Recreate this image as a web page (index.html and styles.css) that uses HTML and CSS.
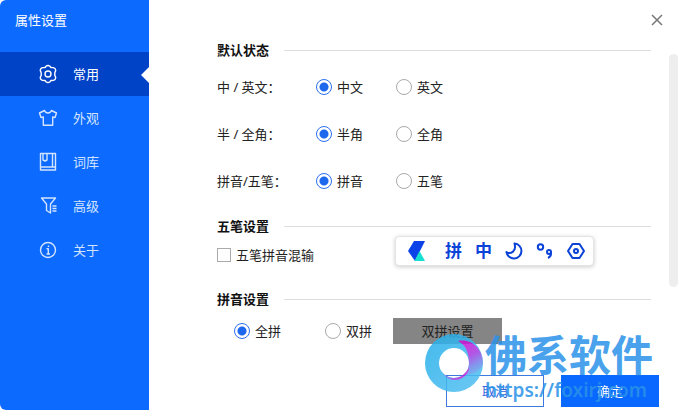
FILE: index.html
```html
<!DOCTYPE html>
<html lang="zh-CN">
<head>
  <meta charset="UTF-8">
  <meta name="viewport" content="width=device-width, initial-scale=1.0">
  <title>属性设置</title>
  <link rel="stylesheet" href="styles.css">
</head>
<body>
  <div class="window">
    <aside class="sidebar">
      <h1 class="title">属性设置</h1>
      <nav class="nav">
        <a class="nav-item active" href="#common">
          <svg class="icon" viewBox="0 0 20 20">
            <path d="M8 2.2Q10 .8 12 2.2L13 3.5L15.5 3.6Q17.8 4.2 17.7 6.6L16.8 8.7V11.3L17.7 13.4Q17.8 15.8 15.5 16.4L13 16.5L12 17.8Q10 19.2 8 17.8L7 16.5L4.5 16.4Q2.2 15.8 2.3 13.4L3.2 11.3V8.7L2.3 6.6Q2.2 4.2 4.5 3.6L7 3.5Z"/>
            <circle cx="10" cy="10" r="3"/>
          </svg>
          常用
        </a>
        <a class="nav-item" href="#skin">
          <svg class="icon" viewBox="0 0 20 20">
            <path d="M6.5 2.5L1.5 5L3 9.5L5.3 9V17.3H14.7V9L17 9.5L18.5 5L13.5 2.5Q12.5 5 10 5T6.5 2.5Z"/>
          </svg>
          外观
        </a>
        <a class="nav-item" href="#dict">
          <svg class="icon" viewBox="0 0 20 20">
            <path d="M2.5 1.5H17.5V18H2.5ZM2.5 15H17.5M14.5 1.5V15M5 1.5V8L7 9L9 8V1.5"/>
          </svg>
          词库
        </a>
        <a class="nav-item" href="#advanced">
          <svg class="icon" viewBox="0 0 20 20">
            <path d="M3.5 2H17.5L12.5 8V17L8.5 14.5V8ZM14.5 10H18.5M14.5 12.5H18.5M14.5 15H18.5"/>
          </svg>
          高级
        </a>
        <a class="nav-item" href="#about">
          <svg class="icon" viewBox="0 0 20 20">
            <circle cx="10" cy="10" r="7.5"/>
            <path d="M10.5 5.5V7M8.5 8.8H10.3V14M8.5 14H12"/>
          </svg>
          关于
        </a>
      </nav>
    </aside>

    <main class="content">
      <button class="close" type="button" aria-label="关闭">
        <svg viewBox="0 0 12 12"><path d="M1 1L11 11M11 1L1 11"/></svg>
      </button>

      <form class="settings" id="settings">
        <h2 class="heading">默认状态</h2>
        <div class="row">
          <span class="label">中 / 英文：</span>
          <label class="option"><input type="radio" name="lang" checked>中文</label>
          <label class="option"><input type="radio" name="lang">英文</label>
        </div>
        <div class="row">
          <span class="label">半 / 全角：</span>
          <label class="option"><input type="radio" name="width" checked>半角</label>
          <label class="option"><input type="radio" name="width">全角</label>
        </div>
        <div class="row">
          <span class="label">拼音/五笔：</span>
          <label class="option"><input type="radio" name="mode" checked>拼音</label>
          <label class="option"><input type="radio" name="mode">五笔</label>
        </div>

        <h2 class="heading">五笔设置</h2>
        <div class="row row-mix">
          <label class="option"><input type="checkbox">五笔拼音混输</label>
          <div class="ime-bar">
            <svg class="ime-logo" viewBox="0 0 18 20">
              <path fill="#0b43e8" d="M6 0H17L7 20L0 10Z"/>
              <path fill="#16e0cf" d="M11.5 10L17 20H6.5Z"/>
            </svg>
            <span>拼</span>
            <span>中</span>
            <svg class="ime-icon" viewBox="0 0 18 18">
              <path d="M9.5 1.5A7.5 7.5 0 1 1 1.5 10C5 12.5 12 10 9.5 1.5Z"/>
            </svg>
            <svg class="ime-icon" viewBox="0 0 18 18">
              <circle cx="4.5" cy="5" r="2.7"/>
              <circle cx="13" cy="10" r="2"/>
              <path d="M15 10Q15.5 14.5 12 16"/>
            </svg>
            <svg class="ime-icon" viewBox="0 0 18 18">
              <path d="M5.5 2H12.5L17 9L12.5 16H5.5L1 9Z"/>
              <circle cx="9" cy="9" r="2"/>
            </svg>
          </div>
        </div>

        <h2 class="heading">拼音设置</h2>
        <div class="row row-pinyin">
          <label class="option"><input type="radio" name="pinyin" checked>全拼</label>
          <label class="option"><input type="radio" name="pinyin">双拼</label>
          <button class="shuangpin" type="button">双拼设置</button>
        </div>
      </form>

      <footer class="footer">
        <button class="btn" type="button">取消</button>
        <button class="btn btn-primary" type="submit" form="settings">确定</button>
      </footer>

      <div class="scrollbar"></div>
    </main>

    <div class="watermark">
      <svg class="ring" viewBox="0 0 60 60">
        <defs>
          <linearGradient id="ring-blue" x1="0" y1="0" x2="1" y2="1">
            <stop offset="0" stop-color="#22aeea"/>
            <stop offset="1" stop-color="#55c0f2"/>
          </linearGradient>
          <linearGradient id="ring-pink" x1=".3" y1="0" x2=".7" y2="1">
            <stop offset="0" stop-color="#d010d8"/>
            <stop offset=".45" stop-color="#a23ce2"/>
            <stop offset=".75" stop-color="#6e86ea"/>
            <stop offset="1" stop-color="#55b0f0"/>
          </linearGradient>
          <linearGradient id="ring-edge" x1="0" y1="0" x2="1" y2="0">
            <stop offset="0" stop-color="#6a70e8"/>
            <stop offset="1" stop-color="#d010d8"/>
          </linearGradient>
        </defs>
        <path fill="url(#ring-blue)" fill-rule="evenodd" d="M30 1A29 29 0 1 1 30 59A29 29 0 1 1 30 1ZM30 15A15 15 0 1 0 30 45A15 15 0 1 0 30 15Z"/>
        <path fill="url(#ring-pink)" d="M34 8C48 5 59 17 59 30C58 37 51 42 41 42Q45 37 45 30C45 20 42 12 34 8Z"/>
        <path fill="url(#ring-edge)" d="M18 39C26 49 40 46 45 34C45 44 29 55 18 39Z"/>
      </svg>
      <div class="watermark-text">
        <strong>佛系软件</strong>
        <span>https://foxirj.com</span>
      </div>
    </div>
  </div>
</body>
</html>
```

FILE: styles.css
```css
* {
  box-sizing: border-box;
}

body {
  margin: 0;
  background-color: #fff;
  color: #222;
  font-family: "Noto Sans", "Noto Sans CJK SC", sans-serif;
  font-size: 13px;
  line-height: 20px;
}

button {
  padding: 0;
  border: none;
  font: inherit;
  cursor: pointer;
}

.window {
  display: grid;
  grid-template-columns: 149px 1fr;
  position: relative;
  min-height: 100vh;
  overflow: hidden;
}

.sidebar {
  background-color: #0d6aff;
  border-radius: 6px 0 0 6px;
  color: #fff;
}

.title {
  margin: 0;
  padding: 10px 15px 22px;
  font-size: 13px;
  font-weight: 400;
}

.nav-item {
  display: flex;
  align-items: center;
  gap: 15px;
  position: relative;
  height: 44px;
  padding-left: 38px;
  color: #d3e4ff;
  text-decoration: none;
}

.nav-item.active {
  background-color: #0043c6;
  color: #fff;
}

.nav-item.active::after {
  content: "";
  position: absolute;
  top: 15px;
  right: 0;
  border: 8px solid transparent;
  border-left: none;
  border-right-color: #fff;
}

.icon {
  width: 20px;
  height: 20px;
  fill: none;
  stroke: currentColor;
  stroke-width: 1.4;
  stroke-linejoin: round;
}

.content {
  display: flex;
  flex-direction: column;
  position: relative;
  padding: 0 21px 3px 68px;
}

.close {
  align-self: flex-end;
  width: 12px;
  height: 12px;
  margin: 14px -4px 14px 0;
  background: none;
}

.close svg {
  display: block;
  fill: none;
  stroke: #777;
  stroke-width: 1.5;
}

.settings {
  flex: 1;
  padding-right: 8px;
}

.heading {
  display: flex;
  align-items: center;
  gap: 15px;
  margin: 0;
  color: #111;
  font-size: 13px;
  font-weight: 700;
}

.heading::after {
  content: "";
  flex: 1;
  height: 1px;
  background-color: #ddd;
}

.row {
  display: flex;
  align-items: center;
  height: 47px;
}

.heading + .row {
  margin-top: 3px;
}

.label {
  width: 99px;
}

.option {
  display: flex;
  align-items: center;
  gap: 5px;
  width: 80px;
}

input {
  appearance: none;
  flex: none;
  margin: 0;
  border: 1px solid #aaa;
  background-color: #fff;
}

input[type="radio"] {
  width: 16px;
  height: 16px;
  border-radius: 50%;
}

input[type="radio"]:checked {
  border-color: #2a70ee;
  background: radial-gradient(circle, #1e68ee 4px, #fff 5px);
}

input[type="checkbox"] {
  width: 14px;
  height: 14px;
}

.row + .heading {
  margin-top: 12px;
}

.heading + .row-mix {
  align-items: flex-start;
  justify-content: space-between;
  height: 38px;
  margin: 0 57px 0 0;
}

.row-mix .option {
  width: auto;
  padding-top: 9px;
}

.row-mix + .heading {
  margin-top: 15px;
}

.ime-bar {
  display: flex;
  align-items: center;
  gap: 13px;
  height: 30px;
  padding: 0 8px 0 12px;
  border: 1px solid #e4e4e4;
  border-radius: 4px;
  background-color: #fff;
  box-shadow: 0 1px 4px #ccc;
  color: #0b43d8;
  font-size: 17px;
  font-weight: 700;
}

.ime-logo {
  width: 18px;
  height: 20px;
  margin-right: 6px;
}

.ime-icon {
  width: 18px;
  height: 18px;
  fill: none;
  stroke: currentColor;
  stroke-width: 2;
  stroke-linejoin: round;
}

.heading + .row-pinyin {
  height: 26px;
  margin-top: 9px;
  padding-left: 17px;
}

.row-pinyin .option {
  width: 91px;
}

.row-pinyin .shuangpin {
  margin-left: -23px;
}

.shuangpin {
  width: 109px;
  height: 26px;
  background-color: #858585;
  color: #222;
}

.footer {
  display: flex;
  justify-content: flex-end;
  gap: 17px;
}

.btn {
  width: 98px;
  height: 32px;
  border: 1px solid #3d7ae0;
  background-color: #fff;
  color: #3264d8;
}

.btn-primary {
  border-color: #0968ff;
  background-color: #0968ff;
  color: #fff;
}

.scrollbar {
  position: absolute;
  top: 54px;
  right: 2px;
  width: 9px;
  height: 233px;
  border-radius: 5px;
  background-color: #eee;
}

.watermark {
  display: flex;
  gap: 1px;
  position: absolute;
  right: 27px;
  bottom: 7px;
  color: #2a92e8;
  opacity: .85;
  pointer-events: none;
}

.ring {
  width: 60px;
  height: 60px;
}

.watermark-text {
  display: flex;
  flex-direction: column;
}

.watermark-text strong {
  font-size: 42px;
  line-height: 44px;
}

.watermark-text span {
  font-size: 19px;
  font-weight: 600;
  line-height: 26px;
}
```
